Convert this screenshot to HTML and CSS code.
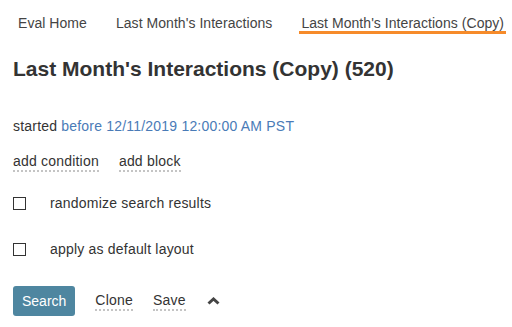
FILE: index.html
```html
<!DOCTYPE html>
<html lang="en">

<head>
    <title>Last Month's Interactions (Copy)</title>
    <link rel="stylesheet" href="styles.css">
</head>

<body>
    <nav class="tabs">
        <a class="tab" href="#">Eval Home</a>
        <a class="tab" href="#">Last Month's Interactions</a>
        <a class="tab active" href="#">Last Month's Interactions (Copy)</a>
    </nav>

    <div class="container">
        <h2 class="title">Last Month's Interactions (Copy) (520)</h2>

        <p class="started">started <a class="date" href="#">before 12/11/2019 12:00:00 AM PST</a></p>

        <div class="actions">
            <a class="dotted" href="#">add condition</a>
            <a class="dotted" href="#">add block</a>
        </div>

        <label class="check">
            <input type="checkbox" name="randomize">
            <span>randomize search results</span>
        </label>

        <label class="check">
            <input type="checkbox" name="defaultLayout">
            <span>apply as default layout</span>
        </label>

        <div class="buttons">
            <button type="button" class="search">Search</button>
            <a class="dotted" href="#">Clone</a>
            <a class="dotted" href="#">Save</a>
            <a class="collapse" href="#">
                <svg width="13" height="8" viewBox="0 0 13 8">
                    <polyline points="1.5,6.5 6.5,2 11.5,6.5" fill="none" stroke="#444" stroke-width="3"/>
                </svg>
            </a>
        </div>
    </div>
</body>

</html>
```

FILE: styles.css
```css
body { margin: 0; font-family: "Liberation Sans", Arial, sans-serif; font-size: 14px; line-height: 16px; letter-spacing: 0.2px; color: #333; }
a { color: inherit; text-decoration: none; }

.tabs { display: flex; gap: 25px; padding: 15px 0 0 16px; white-space: nowrap; letter-spacing: 0.05px; }
.tab { flex-shrink: 0; padding: 0 2px; color: #444; border-bottom: 3px solid transparent; }
.tab.active { border-bottom-color: #f68b2a; }

.container { padding: 0 13px; }
.title { margin: 23px 0 0; font-size: 21px; line-height: 24px; letter-spacing: 0; color: #333; white-space: nowrap; }
.started { margin: 37px 0 0; white-space: nowrap; }
.date { color: #4a7bb7; }

.actions { display: flex; gap: 20px; margin-top: 19px; }
.dotted { padding-bottom: 1px; border-bottom: 2px dotted #c4c4c4; }

.check { display: flex; align-items: center; gap: 24px; margin-top: 23px; }
.check + .check { margin-top: 30px; }
.check input { appearance: none; width: 13px; height: 13px; margin: 0; border: 1px solid #333; background: #fff; }

.buttons { display: flex; align-items: center; gap: 20px; margin-top: 29px; }
.search { padding: 7px 9px; border: none; border-radius: 3px; background: #4e86a0; color: #fff; font: inherit; line-height: 16px; cursor: pointer; }
.collapse { display: flex; margin-left: 1px; }
```
